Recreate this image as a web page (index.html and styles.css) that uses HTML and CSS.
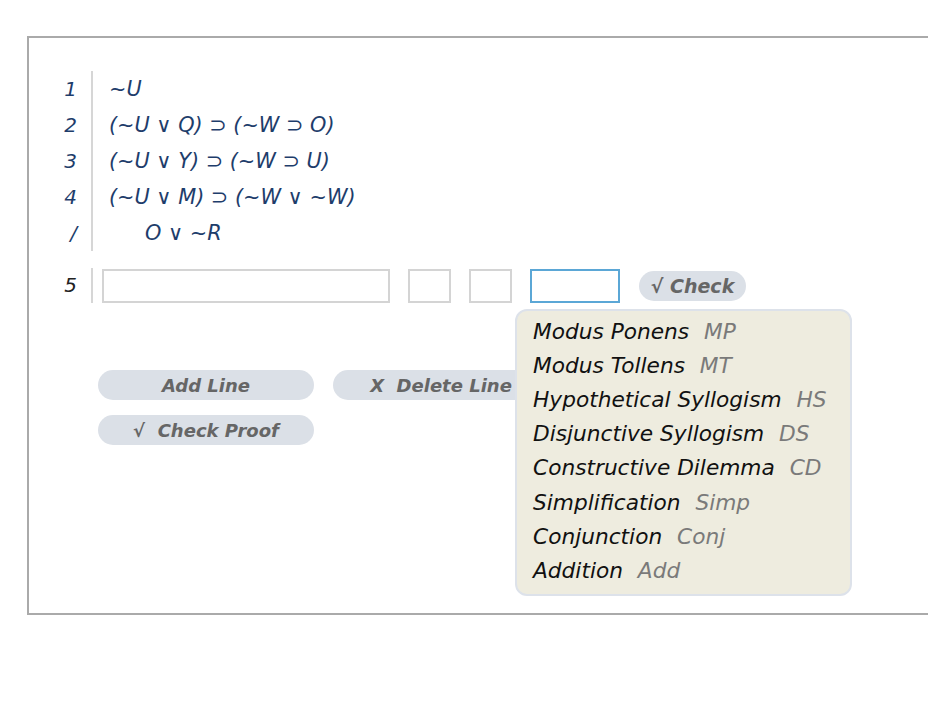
FILE: index.html
```html
<!DOCTYPE html>
<html lang="en">
<head>
    <meta charset="UTF-8">
    <title>Proof Checker</title>
    <link rel="stylesheet" href="styles.css">
</head>
<body>
<div class="frame">
    <div class="proof">
        <div class="premises">
            <div class="row"><div class="num">1</div><div class="formula">~U</div></div>
            <div class="row"><div class="num">2</div><div class="formula">(~U ∨ Q) ⊃ (~W ⊃ O)</div></div>
            <div class="row"><div class="num">3</div><div class="formula">(~U ∨ Y) ⊃ (~W ⊃ U)</div></div>
            <div class="row"><div class="num">4</div><div class="formula">(~U ∨ M) ⊃ (~W ∨ ~W)</div></div>
            <div class="row"><div class="num">/</div><div class="formula conclusion">O ∨ ~R</div></div>
        </div>
        <div class="row new-line">
            <div class="num">5</div>
            <div class="entry">
                <input type="text" class="field wff">
                <input type="text" class="field ref">
                <input type="text" class="field ref">
                <div class="rule-wrap">
                    <input type="text" class="field rule">
                    <ul class="rules">
                        <li>Modus Ponens <span>MP</span></li>
                        <li>Modus Tollens <span>MT</span></li>
                        <li>Hypothetical Syllogism <span>HS</span></li>
                        <li>Disjunctive Syllogism <span>DS</span></li>
                        <li>Constructive Dilemma <span>CD</span></li>
                        <li>Simplification <span>Simp</span></li>
                        <li>Conjunction <span>Conj</span></li>
                        <li>Addition <span>Add</span></li>
                    </ul>
                </div>
                <button class="pill check">√ Check</button>
            </div>
        </div>
    </div>
    <div class="actions">
        <div class="action-row">
            <button class="pill wide">Add Line</button>
            <button class="pill wide">X&nbsp; Delete Line</button>
        </div>
        <div class="action-row">
            <button class="pill wide">√&nbsp; Check Proof</button>
        </div>
    </div>
</div>
</body>
</html>
```

FILE: styles.css
```css
body {
    margin: 0;
    font-family: "DejaVu Sans", Verdana, sans-serif;
    background-color: #ffffff;
    overflow: hidden;
}
.frame {
    margin: 36px 0 0 27px;
    width: 960px;
    height: 542px;
    border: 2px solid #aaaaaa;
    padding-top: 33px;
}
.proof {
    margin-left: 28px;
}
.row {
    display: flex;
    align-items: stretch;
}
.num {
    width: 20px;
    padding-right: 12px;
    margin-right: 2px;
    text-align: right;
    font-style: italic;
    font-size: 20px;
    line-height: 36px;
    color: #1e3d6b;
}
.premises .row .formula,
.new-line .entry {
    border-left: 2px solid #d6d6d6;
}
.formula {
    padding-left: 16px;
    font-style: italic;
    font-size: 20.8px;
    line-height: 36px;
    color: #1e3d6b;
    white-space: pre;
}
.conclusion {
    padding-left: 52px;
}
.new-line {
    margin-top: 17px;
}
.new-line .num {
    color: #222222;
    line-height: 35px;
}
.entry {
    display: flex;
    align-items: center;
    gap: 18px;
    padding-left: 9px;
    height: 35px;
}
.field {
    box-sizing: border-box;
    height: 34px;
    border: 2px solid #d4d4d4;
    margin: 0;
    padding: 0 6px;
    background: #ffffff;
    outline: none;
}
.wff {
    width: 288px;
}
.ref {
    width: 43px;
}
.rule {
    width: 90px;
    border-color: #5ba7d6;
}
.rule-wrap {
    position: relative;
    height: 34px;
}
.rules {
    position: absolute;
    left: -15px;
    top: 40px;
    width: 337px;
    height: 287px;
    box-sizing: border-box;
    margin: 0;
    padding: 4px 0 0 16px;
    list-style: none;
    background-color: #eeecdf;
    border: 2px solid #dde2ea;
    border-radius: 12px;
    z-index: 2;
}
.rules li {
    font-style: italic;
    font-size: 21.7px;
    line-height: 34.2px;
    color: #111111;
    white-space: nowrap;
}
.rules span {
    margin-left: 8px;
    color: #7a7a7a;
}
.pill {
    border: none;
    background-color: #dbe0e7;
    color: #666666;
    font-family: "DejaVu Sans", Verdana, sans-serif;
    font-style: italic;
    font-weight: bold;
    font-size: 18px;
    border-radius: 15px;
    height: 30px;
    padding: 0;
    cursor: pointer;
}
.check {
    width: 107px;
    margin-left: 1px;
    font-size: 19px;
}
.actions {
    margin: 67px 0 0 69px;
    display: flex;
    flex-direction: column;
    gap: 15px;
}
.action-row {
    display: flex;
    gap: 19px;
}
.wide {
    width: 216px;
}
```
